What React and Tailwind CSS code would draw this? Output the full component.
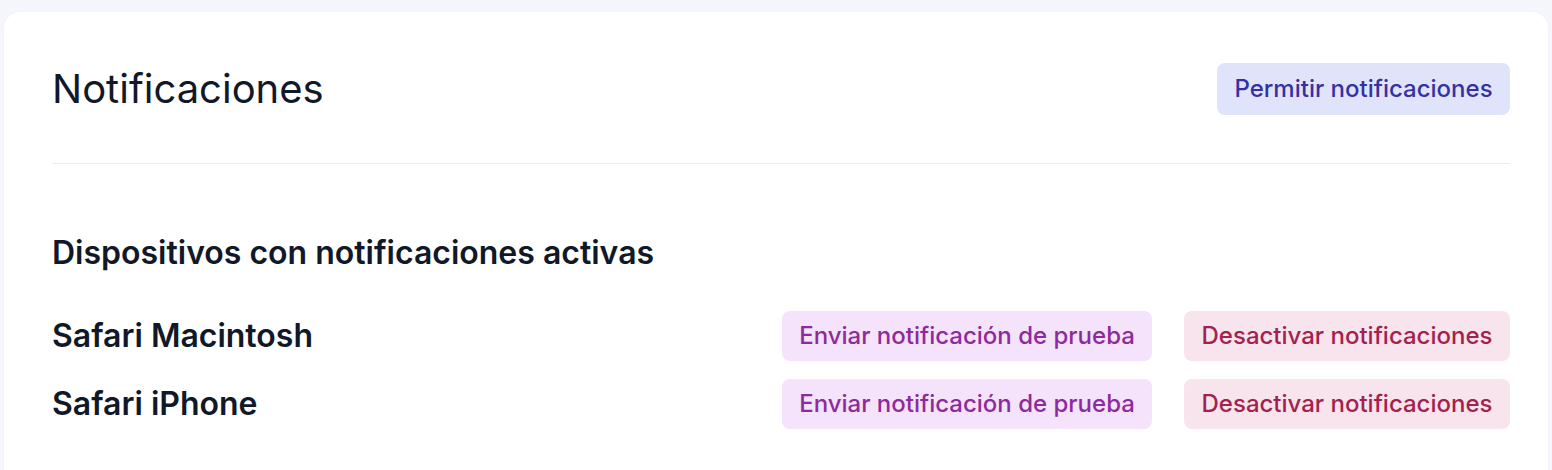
import React from 'react';

const devices = ['Safari Macintosh', 'Safari iPhone'];

export default function App() {
  return (
    <div className="min-h-[470px] bg-[#f5f6fb] pt-[12px] pl-[4px] pr-[4px] font-['Inter',sans-serif]">
      <div className="rounded-[16px] bg-white pl-[48px] pr-[38px] pt-[51px] pb-[56px] shadow-[0_0_2px_rgba(0,0,0,0.04)]">
        <div className="flex items-center justify-between">
          <h1 className="text-[40px] leading-[48px] font-normal text-[#111827]">Notificaciones</h1>
          <button className="h-[52px] w-[293px] rounded-[8px] bg-[#e0e4fb] text-[24px] font-medium text-[#3730a3]">
            Permitir notificaciones
          </button>
        </div>

        <div className="mt-[48px] border-t border-[#ececef]" />

        <h2 className="mt-[69px] text-[32px] leading-[40px] font-semibold text-[#111827]">
          Dispositivos con notificaciones activas
        </h2>

        <div className="mt-[38px] flex flex-col gap-[18px]">
          {devices.map((name) => (
            <div key={name} className="flex items-center justify-between">
              <span className="text-[32px] leading-[40px] font-semibold text-[#111827]">{name}</span>
              <div className="flex gap-[32px]">
                <button className="h-[50px] w-[370px] rounded-[8px] bg-[#f4e3fa] text-[24px] font-medium text-[#8e2a9e]">
                  Enviar notificación de prueba
                </button>
                <button className="h-[50px] w-[326px] rounded-[8px] bg-[#f8e4ec] text-[24px] font-medium text-[#a3214f]">
                  Desactivar notificaciones
                </button>
              </div>
            </div>
          ))}
        </div>
      </div>
    </div>
  );
}
